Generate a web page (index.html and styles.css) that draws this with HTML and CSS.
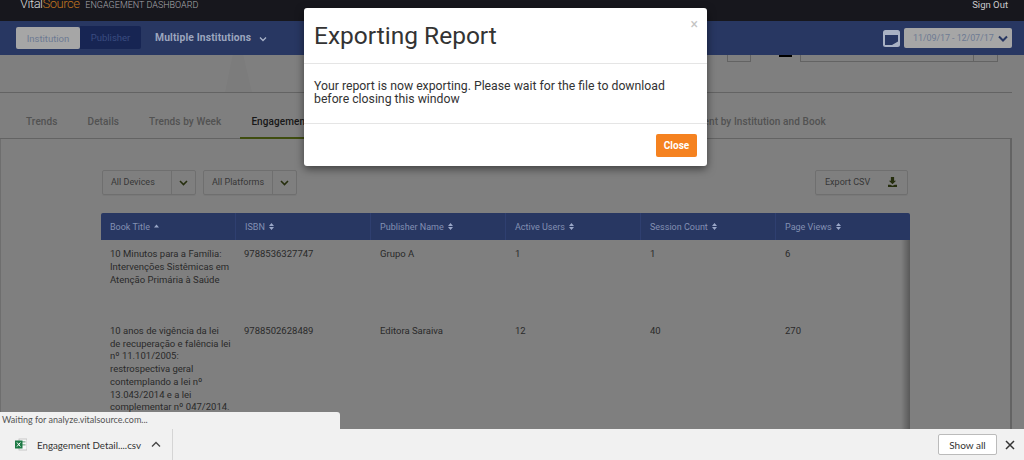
FILE: index.html
```html
<!DOCTYPE html>
<html lang="en">
<head>
<meta charset="utf-8">
<title>Engagement Dashboard</title>
<link rel="stylesheet" href="styles.css">
</head>
<body>
<div class="page">
  <header class="topbar">
    <div class="brand"><span class="vital">Vital</span><span class="source">Source</span><span class="dash">ENGAGEMENT DASHBOARD</span></div>
    <a class="signout">Sign Out</a>
  </header>
  <nav class="bluebar">
    <div class="toggle"><span class="tog on">Institution</span><span class="tog off">Publisher</span></div>
    <span class="inst">Multiple Institutions</span>
    <svg class="inst-caret" width="8" height="6" viewBox="0 0 8 6"><path d="M1 1.5l3 3 3-3" fill="none" stroke="#a9b3c9" stroke-width="1.3"/></svg>
    <div class="spacer"></div>
    <svg class="cal" width="17" height="17" viewBox="0 0 17 17"><rect x="0" y="0" width="17" height="17" rx="2.5" fill="#a9b2c4"/><rect x="2" y="5" width="13" height="10" fill="#283762"/><path d="M9 15l6-3.5V15z" fill="#a9b2c4"/></svg>
    <div class="daterange"><span>11/09/17 - 12/07/17</span><svg width="10" height="7" viewBox="0 0 10 7"><path d="M1 1.5l4 4 4-4" fill="none" stroke="#283762" stroke-width="2"/></svg></div>
  </nav>
  <section class="hero">
    <div class="hero-ctl">
      <i class="box b1"></i><i class="box b2"></i><i class="person"></i><i class="box b3"></i><i class="box b4"></i>
    </div>
  </section>
  <nav class="tabs">
    <span class="tab">Trends</span>
    <span class="tab">Details</span>
    <span class="tab t3">Trends by Week</span>
    <span class="tab active">Engagement Details</span>
    <span class="tab">Engagement by Institution</span>
    <span class="tab t6">Engagement by Book</span>
    <span class="tab">Engagement by Institution and Book</span>
  </nav>
  <main class="panel">
    <div class="filters">
      <div class="select"><span class="sel-l">All Devices</span><span class="sel-r"><svg width="9" height="6" viewBox="0 0 9 6"><path d="M1 1l3.5 3.5L8 1" fill="none" stroke="#4d5c1c" stroke-width="1.6"/></svg></span></div>
      <div class="select"><span class="sel-l">All Platforms</span><span class="sel-r"><svg width="9" height="6" viewBox="0 0 9 6"><path d="M1 1l3.5 3.5L8 1" fill="none" stroke="#4d5c1c" stroke-width="1.6"/></svg></span></div>
      <div class="spacer"></div>
      <div class="export"><span>Export CSV</span><svg width="9" height="10" viewBox="0 0 10 11"><path d="M3.2 0h3.6v4H9L5 8 1 4h2.2z M0 8.6h2.5L5 9.6l2.5-1H10V11H0z" fill="#4d5c1c"/></svg></div>
    </div>
    <div class="table">
      <div class="row head">
        <div class="cell">Book Title <svg class="sort" width="5" height="7" viewBox="0 0 5 7"><path d="M0 4.5L2.5 1.5 5 4.5z" fill="#9aa7c8"/></svg></div>
        <div class="cell">ISBN <svg class="sort" width="5" height="7" viewBox="0 0 5 7"><path d="M0 3L2.5 0 5 3zM0 4L2.5 7 5 4z" fill="#9aa7c8"/></svg></div>
        <div class="cell">Publisher Name <svg class="sort" width="5" height="7" viewBox="0 0 5 7"><path d="M0 3L2.5 0 5 3zM0 4L2.5 7 5 4z" fill="#9aa7c8"/></svg></div>
        <div class="cell">Active Users <svg class="sort" width="5" height="7" viewBox="0 0 5 7"><path d="M0 3L2.5 0 5 3zM0 4L2.5 7 5 4z" fill="#9aa7c8"/></svg></div>
        <div class="cell">Session Count <svg class="sort" width="5" height="7" viewBox="0 0 5 7"><path d="M0 3L2.5 0 5 3zM0 4L2.5 7 5 4z" fill="#9aa7c8"/></svg></div>
        <div class="cell">Page Views <svg class="sort" width="5" height="7" viewBox="0 0 5 7"><path d="M0 3L2.5 0 5 3zM0 4L2.5 7 5 4z" fill="#9aa7c8"/></svg></div>
      </div>
      <div class="row r1">
        <div class="cell">10 Minutos para a Família: Intervenções Sistêmicas em Atenção Primária à Saúde</div>
        <div class="cell">9788536327747</div>
        <div class="cell">Grupo A</div>
        <div class="cell">1</div>
        <div class="cell">1</div>
        <div class="cell">6</div>
      </div>
      <div class="row r2">
        <div class="cell">10 anos de vigência da lei de recuperação e falência lei nº 11.101/2005: restrospectiva geral contemplando a lei nº 13.043/2014 e a lei complementar nº 047/2014.</div>
        <div class="cell">9788502628489</div>
        <div class="cell">Editora Saraiva</div>
        <div class="cell">12</div>
        <div class="cell">40</div>
        <div class="cell">270</div>
      </div>
      <div class="table-shadow"></div>
    </div>
  </main>
  <div class="backdrop"></div>
  <div class="modal">
    <div class="m-head"><h1>Exporting Report</h1><span class="m-x">×</span></div>
    <div class="m-body">Your report is now exporting. Please wait for the file to download before closing this window</div>
    <div class="m-foot"><button class="m-close">Close</button></div>
  </div>
  <div class="status">Waiting for analyze.vitalsource.com...</div>
  <footer class="shelf">
    <div class="dl">
      <svg width="12" height="13" viewBox="0 0 12 13"><rect x="4" y="1" width="8" height="11" fill="#f7f7f7" stroke="#b5b5b5" stroke-width=".7"/><rect x="7" y="3" width="3.5" height="1.6" fill="#9dbfa9"/><rect x="7" y="6" width="3.5" height="1.6" fill="#9dbfa9"/><rect x="0" y="2.5" width="7.5" height="8" fill="#1d7a45"/><path d="M2 4.5l3.4 4M5.4 4.5L2 8.5" stroke="#fff" stroke-width="1"/></svg>
      <span class="dl-name">Engagement Detail....csv</span>
      <svg class="dl-caret" width="10" height="7" viewBox="0 0 10 7"><path d="M1 5.5l4-4 4 4" fill="none" stroke="#444" stroke-width="1.3"/></svg>
    </div>
    <div class="spacer"></div>
    <button class="showall">Show all</button>
    <svg class="shelf-x" width="10" height="10" viewBox="0 0 10 10"><path d="M1 1l8 8M9 1l-8 8" stroke="#333" stroke-width="1.5"/></svg>
  </footer>
</div>
</body>
</html>
```
FILE: styles.css
```css
* { box-sizing: border-box; }
html, body { margin: 0; padding: 0; }
body { font-family: Roboto, "Liberation Sans", sans-serif; background: #fff; }
.page { position: relative; width: 1024px; height: 460px; overflow: hidden; display: flex; flex-direction: column; background: #fff; }
.spacer { flex: 1; }

.topbar { position: relative; z-index: 1; height: 21px; flex: none; background: #17171d; display: flex; justify-content: space-between; align-items: flex-start; padding: 0 16px 0 20px; }
.brand { display: flex; align-items: baseline; margin-top: -5px; font-size: 13px; line-height: 18px; font-weight: 300; letter-spacing: -.5px; }
.vital { color: #d8d8d8; }
.source { color: #c0741f; }
.dash { font-size: 9px; margin-left: 6px; color: #a9a9ad; font-weight: 300; letter-spacing: 0; }
.signout { font-size: 9.5px; line-height: 10px; color: #c9c9cc; }

.bluebar { position: relative; z-index: 1; height: 34px; flex: none; background: #283762; display: flex; align-items: center; padding: 0 12px 0 16px; }
.toggle { display: flex; height: 23px; margin-top: -1px; align-items: flex-end; }
.tog { display: flex; align-items: center; justify-content: center; font-size: 9.5px; }
.tog.on { width: 64px; height: 22px; background: #a6a6a6; color: #6d7a93; border-radius: 2px; }
.tog.off { width: 61px; height: 23px; background: #172553; color: #3a4c80; border-radius: 0 2px 2px 0; }
.inst { font-size: 10.3px; font-weight: 700; letter-spacing: .15px; color: #9ca6be; margin: -1px 0 0 14px; }
.inst-caret { margin: 1px 0 0 8px; }
.cal { margin: 0 4px 0 0; }
.daterange { width: 108px; height: 20px; background: #a6a6a6; border-radius: 2px; display: flex; align-items: center; justify-content: space-between; padding: 0 4px 0 9px; font-size: 9px; letter-spacing: -.1px; color: #6d7a93; flex: none; }
.daterange span { white-space: nowrap; }

.hero { position: relative; height: 38px; flex: none; background: #fff; width: 1012px; border-bottom: 1px solid #c6c6c6; }
.hero::before { content: ""; position: absolute; left: 225px; top: 0; width: 27px; height: 37px; background: #f9f9f9; clip-path: polygon(28% 0, 68% 0, 100% 100%, 0 100%); }
.hero-ctl { display: flex; height: 7px; padding-left: 727px; }
.box { display: block; border: 1px solid #c6c6c6; border-top: 0; height: 7px; }
.b1 { width: 24px; }
.b2 { display: none; }
.person { display: block; width: 13px; height: 2px; margin-left: 28px; background: #000; }
.b3 { width: 174px; margin-left: 8px; }
.b4 { width: 25px; margin-left: -1px; }

.tabs { height: 46px; flex: none; width: 1012px; display: flex; background: #fff; border-bottom: 1px solid #c6c6c6; padding-left: 11px; }
.tab { font-size: 10px; letter-spacing: .1px; color: #a4a4a4; font-weight: 500; padding: 11px 15px 0; height: 46px; display: flex; align-items: center; white-space: nowrap; }
.t3 { padding-right: 19px; }
.t6 { padding-right: 27px; }
.tab.active { color: #333; border-bottom: 2px solid #7f9a1f; padding-left: 11px; padding-top: 13px; }

.panel { flex: 1; width: 1012px; border-right: 2px solid #c6c6c6; border-left: 1px solid #dcdcdc; padding: 31px 100px 0 100px; min-height: 0; overflow: hidden; }
.filters { display: flex; gap: 7px; height: 25px; width: 806px; margin-left: 1px; margin-bottom: 18px; }
.select { display: flex; border: 1px solid #dedede; border-radius: 2px; height: 25px; width: 94px; box-shadow: 0 1px 1px rgba(0,0,0,.06); }
.sel-l { flex: 1; display: flex; align-items: center; padding: 0 0 2px 8px; font-size: 9px; color: #707070; border-right: 1px solid #dedede; white-space: nowrap; }
.sel-r { width: 23px; display: flex; align-items: center; justify-content: center; }
.export { display: flex; width: 93px; height: 25px; align-items: center; justify-content: space-between; border: 1px solid #dedede; border-radius: 2px; padding: 0 10px 2px 9px; font-size: 9px; color: #707070; box-shadow: 0 1px 1px rgba(0,0,0,.06); }

.table { position: relative; width: 809px; }
.row { display: grid; grid-template-columns: 135px 135px 135px 135px 135px 134px; }
.head { position: relative; z-index: 1; height: 27px; background: #283762; border-radius: 2px 2px 0 0; }
.head .cell { display: flex; align-items: center; gap: 4px; padding: 0 9px; font-size: 9px; border-right: 1px solid #2f3f70; color: #8390b2; white-space: nowrap; }
.head .cell:last-child { border-right: 0; }
.r1 { height: 77px; }
.r2 { height: 120px; }
.r1 .cell { font-size: 9.5px; line-height: 13px; padding: 7px 5px 0 9px; color: #555; }
.r2 .cell { font-size: 9.5px; line-height: 12.7px; padding: 8px 5px 0 9px; color: #555; }
.r1 .cell:nth-child(2), .r2 .cell:nth-child(2) { padding-left: 8px; }
.table-shadow { position: absolute; top: 27px; right: 0; bottom: -200px; width: 9px; background: linear-gradient(to right, rgba(0,0,0,0), rgba(0,0,0,.3)); }

.backdrop { position: absolute; inset: 0; background: rgba(0,0,0,.5); }
.modal { position: absolute; z-index: 2; left: 304px; top: 8px; width: 403px; height: 158px; background: #fff; border-radius: 3px; box-shadow: 0 3px 9px rgba(0,0,0,.5); display: flex; flex-direction: column; }
.m-head { height: 56px; border-bottom: 1px solid #e5e5e5; padding: 0 10px; display: flex; justify-content: space-between; }
.m-head h1 { margin: 0; font-size: 24.5px; font-weight: 400; line-height: 55px; color: #333; }
.m-x { font-size: 14px; color: #c4c4c4; line-height: 14px; margin-top: 9px; margin-right: -1px; }
.m-body { height: 60px; border-bottom: 1px solid #e5e5e5; padding: 16px 10px 0; font-size: 12.25px; line-height: 13px; color: #333; }
.m-foot { flex: 1; display: flex; justify-content: flex-end; align-items: flex-start; padding: 10px 10px 0; }
.m-close { width: 41px; height: 23px; border: 0; border-radius: 2px; background: #f58220; color: #fff; font: 700 10px Roboto, sans-serif; padding: 0; }

.status { position: absolute; z-index: 3; left: 0; bottom: 31px; width: 340px; height: 17px; background: #f1f1f1; border-radius: 0 3px 0 0; font: 9px Lato, sans-serif; line-height: 16px; color: #555; padding-left: 2px; }
.shelf { position: absolute; z-index: 3; left: 0; right: 0; bottom: 0; height: 31px; background: #f1f1f1; display: flex; align-items: center; padding-right: 9px; }
.dl { width: 173px; height: 31px; display: flex; align-items: center; padding-left: 15px; border-right: 1px solid #d5d5d5; }
.dl-name { font: 9.75px Lato, sans-serif; color: #333; margin-left: 10px; white-space: nowrap; }
.dl-caret { margin-left: 10px; }
.showall { width: 59px; height: 21px; border: 1px solid #bbb; border-radius: 2px; background: #fff; font: 10px Lato, sans-serif; color: #333; padding: 0; margin-right: 8px; }
```
